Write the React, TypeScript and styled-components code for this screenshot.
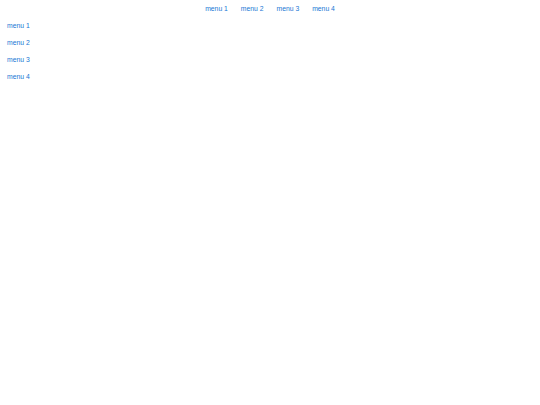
import React from "react";
import styled, { createGlobalStyle } from "styled-components";

const menus = ["menu 1", "menu 2", "menu 3", "menu 4"];

const App = () => {
	return (
		<>
			<GlobalStyle />
			<Page>
				<TopNav>
					{menus.map((m) => (
						<TopLink key={m} href="#">
							{m}
						</TopLink>
					))}
				</TopNav>
				<SideNav>
					{menus.map((m) => (
						<SideLink key={m} href="#">
							{m}
						</SideLink>
					))}
				</SideNav>
			</Page>
		</>
	);
};

export default App;

const GlobalStyle = createGlobalStyle`
	body {
		margin: 0;
		background: #ffffff;
		font-family: "Liberation Sans", Arial, sans-serif;
	}
`;

const Page = styled.div`
	display: flex;
	flex-direction: column;
	width: 540px;
	min-height: 405px;
`;

const TopNav = styled.nav`
	display: flex;
	justify-content: center;
	gap: 13px;
	height: 17px;
	padding-top: 1px;
	box-sizing: border-box;
	align-items: center;
`;

const TopLink = styled.a`
	font-size: 6.8px;
	color: #1877d4;
	text-decoration: none;
	line-height: 1;
`;

const SideNav = styled.nav`
	display: flex;
	flex-direction: column;
	gap: 9px;
	padding: 5px 0 0 7px;
`;

const SideLink = styled.a`
	font-size: 6.8px;
	color: #1877d4;
	text-decoration: none;
	line-height: 8px;
`;
